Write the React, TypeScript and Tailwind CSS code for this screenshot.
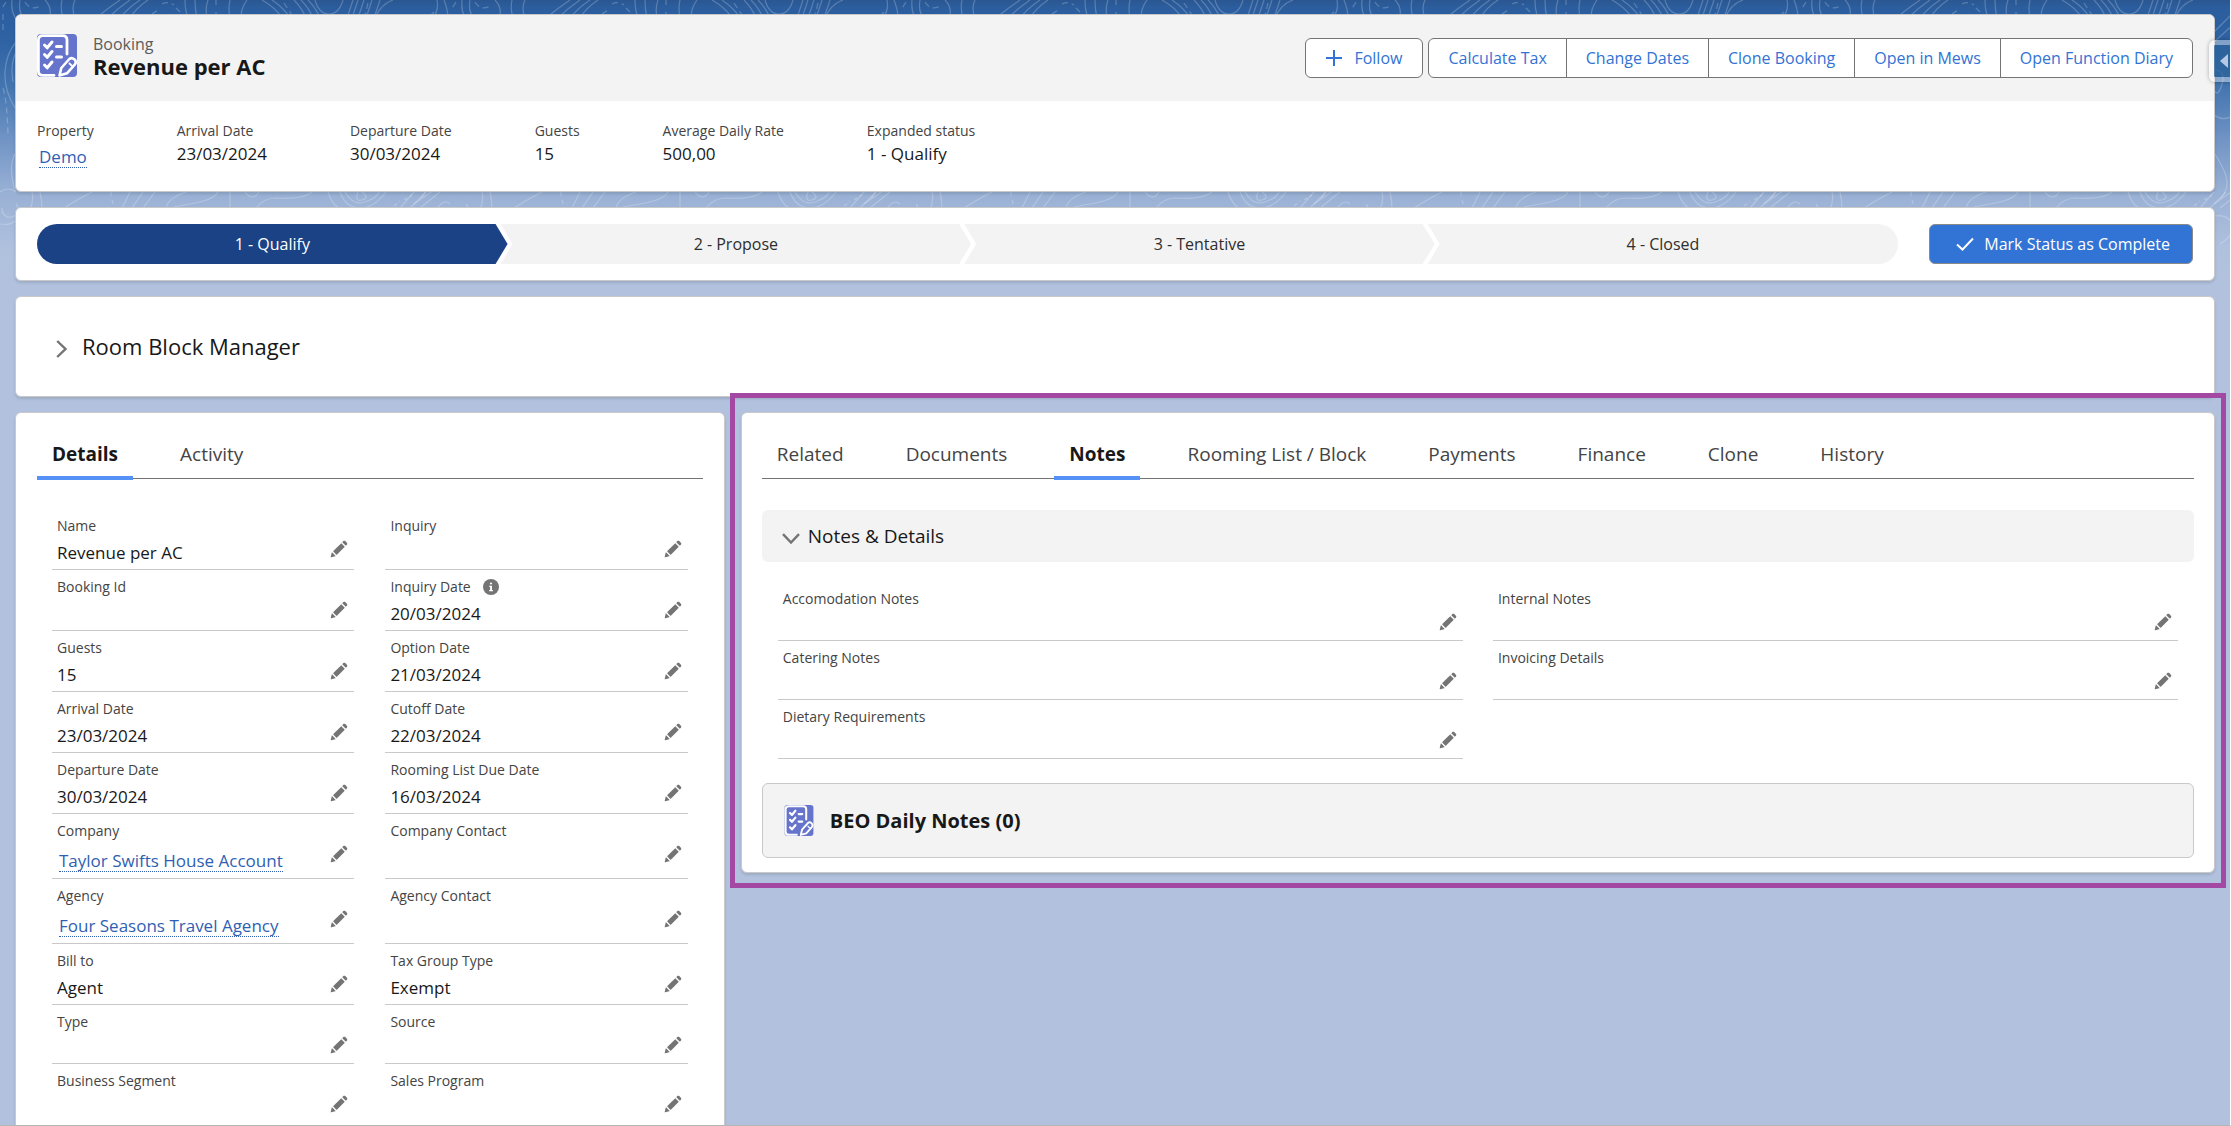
import { clsx } from 'clsx';

type Field = {
  label: string;
  value?: string;
  link?: boolean;
  info?: boolean;
};

const actions = ['Calculate Tax', 'Change Dates', 'Clone Booking', 'Open in Mews', 'Open Function Diary'];

const highlights: Field[] = [
  { label: 'Property', value: 'Demo', link: true },
  { label: 'Arrival Date', value: '23/03/2024' },
  { label: 'Departure Date', value: '30/03/2024' },
  { label: 'Guests', value: '15' },
  { label: 'Average Daily Rate', value: '500,00' },
  { label: 'Expanded status', value: '1 - Qualify' },
];

const stages = ['1 - Qualify', '2 - Propose', '3 - Tentative', '4 - Closed'];

const detailTabs = ['Details', 'Activity'];
const recordTabs = ['Related', 'Documents', 'Notes', 'Rooming List / Block', 'Payments', 'Finance', 'Clone', 'History'];

const details: Field[] = [
  { label: 'Name', value: 'Revenue per AC' },
  { label: 'Inquiry' },
  { label: 'Booking Id' },
  { label: 'Inquiry Date', value: '20/03/2024', info: true },
  { label: 'Guests', value: '15' },
  { label: 'Option Date', value: '21/03/2024' },
  { label: 'Arrival Date', value: '23/03/2024' },
  { label: 'Cutoff Date', value: '22/03/2024' },
  { label: 'Departure Date', value: '30/03/2024' },
  { label: 'Rooming List Due Date', value: '16/03/2024' },
  { label: 'Company', value: 'Taylor Swifts House Account', link: true },
  { label: 'Company Contact' },
  { label: 'Agency', value: 'Four Seasons Travel Agency', link: true },
  { label: 'Agency Contact' },
  { label: 'Bill to', value: 'Agent' },
  { label: 'Tax Group Type', value: 'Exempt' },
  { label: 'Type' },
  { label: 'Source' },
  { label: 'Business Segment' },
  { label: 'Sales Program' },
];

const notes: Field[] = [
  { label: 'Accomodation Notes' },
  { label: 'Internal Notes' },
  { label: 'Catering Notes' },
  { label: 'Invoicing Details' },
  { label: 'Dietary Requirements' },
];

const card = 'rounded-md border border-[#c9c9c9] bg-white shadow-[0_2px_3px_rgba(0,0,0,0.12)]';

function NotesIcon({ className }: { className: string }) {
  return (
    <svg viewBox="0 0 40 43" className={className} aria-hidden="true">
      <rect width="40" height="43" rx="4" fill="#6675cb" />
      <g fill="none" stroke="#fff" strokeLinecap="round" strokeLinejoin="round">
        <path d="M17 41.400H6Q1.400 41.400 1.400 37V6Q1.400 1.600 6 1.600H25.500Q30 1.600 30 6V20" strokeWidth="2.800" />
        <path d="M7.500 11l2.700 2.800 4.800-5.800M7.500 20.500l2.700 2.800 4.800-5.800M7.500 31l2.700 2.800 4.800-5.800" strokeWidth="3" />
        <path d="M19.500 12.600h5M19.500 23h5" strokeWidth="3" />
        <path d="M22.500 41.500l1.800-7.500 8-9q2.500-2 5 .2t.8 5L30 39.300z" strokeWidth="2.600" />
        <path d="M32.500 29.500l2.200 2.200" strokeWidth="1.800" />
      </g>
    </svg>
  );
}

function PencilIcon() {
  return (
    <svg viewBox="0 0 52 52" className="size-[18px] fill-[#747474]" aria-hidden="true">
      <path d="M9.500 33.400l8.900 8.900c.4.4 1 .4 1.400 0L42 20c.4-.4.4-1 0-1.400l-8.800-8.800c-.4-.4-1-.4-1.400 0L9.500 32.100c-.4.4-.4 1 0 1.300z" />
      <path d="M36.100 5.700c-.4.4-.4 1 0 1.400l8.800 8.800c.4.4 1 .4 1.400 0l2.500-2.500c1.600-1.500 1.600-3.900 0-5.500l-4.700-4.700c-1.600-1.600-4.100-1.600-5.700 0l-2.300 2.500z" />
      <path d="M2.100 48.200c-.2 1 .7 1.900 1.700 1.700l10.900-2.600c.4-.1.7-.3.9-.5l.2-.2c.2-.2.3-.9-.1-1.300l-9-9c-.4-.4-1.100-.3-1.300-.1l-.2.2c-.3.3-.4.6-.5.9L2.100 48.200z" />
    </svg>
  );
}

function InfoIcon() {
  return (
    <svg viewBox="0 0 16 16" className="size-4" aria-hidden="true">
      <circle cx="8" cy="8" r="8" fill="#747474" />
      <path d="M8 3.400a1.100 1.100 0 1 1 0 2.200 1.100 1.100 0 0 1 0-2.200zM6.300 6.700H9v4.200h.9v1.400H6.200v-1.400h.9V8h-.8z" fill="#fff" />
    </svg>
  );
}

function Backdrop() {
  return (
    <svg className="absolute inset-x-0 top-0 h-[290px] w-full" aria-hidden="true">
      <defs>
        <linearGradient id="sky" x1="0" y1="0" x2="0" y2="1">
          <stop offset="0" stopColor="#2a5791" />
          <stop offset="0.030" stopColor="#2c5e9f" />
          <stop offset="0.150" stopColor="#2f63a4" />
          <stop offset="0.300" stopColor="#4475b0" />
          <stop offset="0.480" stopColor="#7094c5" />
          <stop offset="0.660" stopColor="#98b0d5" />
          <stop offset="0.860" stopColor="#b0c1de" />
          <stop offset="1" stopColor="#b2c2de" />
        </linearGradient>
        <pattern id="contours" width="450" height="290" patternUnits="userSpaceOnUse">
          <g fill="none" stroke="#fff" strokeOpacity="0.22" strokeWidth="1.200">
            <path d="M12 0q-2 18 12 26M20 0q-2 12 4 18M45 0q8 8 4 20M62 0q-2 8 1 18M75 0q-4 8 0 18M120 0q-12 8-24 18M130 0q-12 8-22 18M140 0q-12 8-20 18M148 0q-12 8-18 18" />
            <path d="M185 0q0 10 3 18M195 0q0 10 2 18M208 0q-3 8-1 18M230 0q-2 8 0 18M247 0q-6 8-6 18M262 0q14 8 20 18M272 0q12 8 18 18M294 0q8 8 12 18M301 0q8 8 12 18M308 0q8 8 12 18M315 0q4 14 14 14t14-14" />
            <path d="M353 0l-6 18M358 0l-6 18M364 0l-6 18M372 0l-6 18M380 0l-6 18M393 0q-12 4-18 18M437 0q2 10-4 18M444 0q4 10 4 18" />
            <path d="M25 2q6 10 17 3M152 14l6-4M162 4q6-3 12 1M176 8l4 4M216 0v5M216 12v6M284 3l8 12M368 3l-3 12M6 2l-5 8M3 14v16" strokeDasharray="6 4" />
            <path d="M32 192q2 8-2 18M40 192q2 8 2 18M92 192q-12 6-28 16M130 192l-8 16M143 192l-11 16M155 192l-12 16M218 192q-4 8-28 12t-24 6M186 192q-18 6-20 16M230 192v16M245 192q8 10 14 0M312 192q-10 8-36 6-12 0-20 10M328 192q6 18 18 18M340 192q6 16 20 16t26-16M345 192q8 14 20 10t14-10M358 192q-4 10 4 8t0-8M414 192l-14 16M426 192l-16 16M440 192l-20 16M450 204q-6-6-14 6" />
            <path d="M111 192v5M112 200l2 6M404 200l8-5M394 206l6-5" strokeDasharray="4 3" />
            <path d="M16 42Q6 54 5 72t10 36M16 52q-6 12-3 30M16 152q-6 10-4 24t4 16M0 192q8-6 16 0M2 208a8 8 0 1 0 14-4M0 224q10 2 16-4" />
            <path d="M3 88q4 12 5 46" strokeDasharray="6 4" />
            <path d="M414 32l20-20M414 42l22-20M414 70q12 0 8 14t-8 6M412 113q10 10 22 2M412 150q10 14 14 26t-6 24M414 204l20-14M414 216q14-2 18 8t-12 20" />
          </g>
        </pattern>
      </defs>
      <rect width="100%" height="290" fill="url(#sky)" />
      <rect width="100%" height="250" fill="url(#contours)" />
    </svg>
  );
}

function Tabs({ items, active }: { items: string[]; active: string }) {
  return (
    <div role="tablist" className="flex h-[66px] gap-8 border-b border-[#747474]">
      {items.map((item) => (
        <button
          key={item}
          role="tab"
          aria-selected={item === active}
          className={clsx(
            '-mb-0.5 border-b-4 px-[15px] pt-5 text-[19px] whitespace-nowrap',
            item === active ? 'border-[#5591f6] font-bold text-[#181818]' : 'border-transparent text-[#444444]',
          )}
        >
          {item}
        </button>
      ))}
    </div>
  );
}

function FieldRow({ field }: { field: Field }) {
  return (
    <div className="flex flex-col border-b border-[#c9c9c9] pt-[7px] pr-1.5 pb-[3px] pl-[5px]">
      <div className="flex h-5 items-center gap-3 text-sm text-[#444444]">
        {field.label}
        {field.info && <InfoIcon />}
      </div>
      <div className="mt-1 flex min-h-6 items-start justify-between">
        {field.link ? (
          <a href="#" className="mx-0.5 mt-1.5 mb-[3px] border-b border-dotted border-[#2f5fb3] text-[17px] leading-5 text-[#2f5fb3]">
            {field.value}
          </a>
        ) : (
          <span className="text-[17px] leading-[26px] text-[#181818]">{field.value}</span>
        )}
        <button aria-label={`Edit ${field.label}`}>
          <PencilIcon />
        </button>
      </div>
    </div>
  );
}

export default function App() {
  return (
    <div className="relative h-screen overflow-hidden border-r border-b border-r-white border-b-[#b5b5b5] bg-[#b2c2de] font-['Open_Sans','Noto_Sans',sans-serif]">
      <Backdrop />

      <main className="relative flex flex-col gap-[15px] px-[15px] pt-3.5">
        <header className={clsx(card, 'overflow-hidden')}>
          <div className="flex h-[86px] items-start justify-between bg-[#f3f3f3] px-[21px] pt-[19px]">
            <div className="flex gap-4">
              <NotesIcon className="h-[43px] w-10" />
              <div>
                <p className="text-base leading-5 text-[#5c5c5c]">Booking</p>
                <h1 className="text-[22px] leading-6 font-bold text-[#181818]">Revenue per AC</h1>
              </div>
            </div>
            <div className="mt-1 flex gap-[5px] text-base text-[#3273d5]">
              <button className="flex h-10 items-center gap-3 rounded-md border border-[#747474] bg-white px-5">
                <svg viewBox="0 0 16 16" className="size-4" aria-hidden="true">
                  <path d="M8 0v16M0 8h16" stroke="currentColor" strokeWidth="2" />
                </svg>
                Follow
              </button>
              <div className="flex h-10 divide-x divide-[#747474] overflow-hidden rounded-md border border-[#747474] bg-white">
                {actions.map((action) => (
                  <button key={action} className="px-[19px]">
                    {action}
                  </button>
                ))}
              </div>
            </div>
          </div>
          <dl className="flex h-[90px] gap-[83px] px-[21px] pt-5">
            {highlights.map((item) => (
              <div key={item.label}>
                <dt className="text-sm leading-5 text-[#444444]">{item.label}</dt>
                <dd className="text-[17px] leading-[26px] text-[#181818]">
                  {item.link ? (
                    <a href="#" className="mx-0.5 mt-1.5 inline-block border-b border-dotted border-[#2f5fb3] leading-5 text-[#2f5fb3]">
                      {item.value}
                    </a>
                  ) : (
                    item.value
                  )}
                </dd>
              </div>
            ))}
          </dl>
        </header>

        <section className={clsx(card, 'flex items-center gap-[31px] px-[21px] py-4')}>
          <ol className="flex h-10 flex-1 overflow-hidden rounded-full">
            {stages.map((stage, index) => (
              <li
                key={stage}
                className={clsx(
                  'flex flex-1 items-center justify-center text-base',
                  index === 0 && 'bg-[#1b4284] text-white [clip-path:polygon(0_0,calc(100%-12px)_0,100%_50%,calc(100%-12px)_100%,0_100%)]',
                  index > 0 && '-ml-[7px] bg-[#f3f3f3] text-[#2e2e2e]',
                  index > 0 && index < 3 && '[clip-path:polygon(0_0,calc(100%-12px)_0,100%_50%,calc(100%-12px)_100%,0_100%,12px_50%)]',
                  index === 3 && '[clip-path:polygon(0_0,100%_0,100%_100%,0_100%,12px_50%)]',
                )}
              >
                {stage}
              </li>
            ))}
          </ol>
          <button className="flex h-10 items-center gap-2.5 rounded-md border border-[#8a8a8a] bg-[#3174d5] pr-[22px] pl-[26px] text-base text-white">
            <svg viewBox="0 0 18 14" className="h-3.5 w-[18px]" aria-hidden="true">
              <path d="M1 7.500l5.500 5L17 1.500" fill="none" stroke="currentColor" strokeWidth="2" />
            </svg>
            Mark Status as Complete
          </button>
        </section>

        <section className={clsx(card, 'flex h-[101px] items-center gap-[15px] px-10')}>
          <svg viewBox="0 0 11 18" className="mt-1 h-[18px] w-[11px]" aria-hidden="true">
            <path d="M1.200 1l8.300 8-8.300 8" fill="none" stroke="#747474" strokeWidth="2.400" />
          </svg>
          <h2 className="text-[22px] text-[#181818]">Room Block Manager</h2>
        </section>

        <div className="grid grid-cols-[13fr_27fr] items-start gap-4">
          <section className={clsx(card, 'px-[21px] pb-6')}>
            <Tabs items={detailTabs} active="Details" />
            <div className="mt-[30px] grid grid-cols-2 gap-x-[31px] px-[15px] [&>*:nth-last-child(-n+2)]:border-b-0">
              {details.map((field) => (
                <FieldRow key={field.label} field={field} />
              ))}
            </div>
          </section>

          <section className={clsx(card, 'relative px-5 pb-3.5')}>
            <div className="pointer-events-none absolute -top-5 -right-3 -bottom-4 -left-3 border-[5px] border-[#a349a4]" />
            <Tabs items={recordTabs} active="Notes" />
            <h3 className="mt-[31px] flex h-[52px] items-center gap-2 rounded-md bg-[#f3f3f3] px-5 text-[19px] text-[#181818]">
              <svg viewBox="0 0 18 11" className="mt-1 h-[11px] w-[18px]" aria-hidden="true">
                <path d="M1 1.200l8 8.300 8-8.300" fill="none" stroke="#747474" strokeWidth="2.400" />
              </svg>
              Notes &amp; Details
            </h3>
            <div className="mt-5 grid grid-cols-2 gap-x-[30px] px-4">
              {notes.map((field) => (
                <FieldRow key={field.label} field={field} />
              ))}
            </div>
            <div className="mt-6 flex h-[75px] items-center gap-4 rounded-md border border-[#c9c9c9] bg-[#f3f3f3] px-[21px]">
              <NotesIcon className="h-[31px] w-[30px]" />
              <h3 className="text-xl font-bold text-[#181818]">BEO Daily Notes (0)</h3>
            </div>
          </section>
        </div>
      </main>

      <button
        aria-label="Open side panel"
        className="absolute top-10 right-0 flex h-[42px] w-[21px] items-center justify-end rounded-l-md border-5 border-r-0 border-white/40 bg-[#2b6399]/70 bg-clip-padding shadow-[0_0_4px_rgba(0,0,0,0.3)]"
      >
        <svg viewBox="0 0 8 14" className="mr-0.5 h-3.5 w-2" aria-hidden="true">
          <path d="M8 0v14L0 7z" fill="#b7c9e2" />
        </svg>
      </button>
    </div>
  );
}
